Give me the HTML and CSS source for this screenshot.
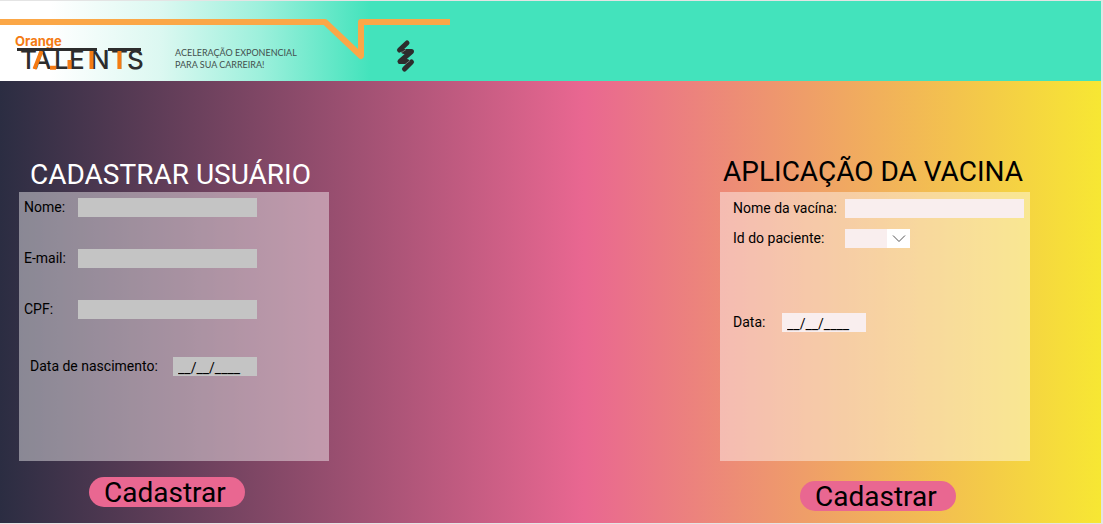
FILE: index.html
```html
<!DOCTYPE html>
<html lang="pt-BR">
<head>
<meta charset="utf-8">
<title>Orange Talents</title>
<link rel="stylesheet" href="styles.css">
</head>
<body>
<div class="page">
  <header class="banner">
    <svg class="brand" width="450" height="80" viewBox="0 1 450 80" role="img" aria-label="Orange Talents">
      <path class="ribbon" d="M0 22H325L361 56V22H450"/>
      <text class="brand-top" x="15" y="46">Orange</text>
      <text class="brand-name" y="69" x="20 33 54 69 90 111 127">TALENTS</text>
      <path class="brand-accent" d="M41.500 51L34.500 69M50 67.700H56M69.500 60V69M91.500 51V69M119.500 51V69"/>
      <path class="brand-bar" d="M17 49.500H97M108 49.500H141"/>
      <text class="tagline" x="175" y="56">ACELERAÇÃO EXPONENCIAL</text>
      <text class="tagline" x="175" y="68">PARA SUA CARREIRA!</text>
      <path class="bolt" d="M407 43L399.500 50M404 51.500H411.500L400 61.500H407M411.500 62L404.500 69"/>
      <path class="bolt-gap" d="M401 53L406 49.500M405 64.500L410 60.500"/>
    </svg>
  </header>
  <main class="content">
    <form class="column user">
      <h1 class="title">CADASTRAR USUÁRIO</h1>
      <div class="panel">
        <div class="row"><label for="nome">Nome:</label><input class="box" id="nome" type="text"></div>
        <div class="row"><label for="email">E-mail:</label><input class="box" id="email" type="email"></div>
        <div class="row"><label for="cpf">CPF:</label><input class="box" id="cpf" type="text"></div>
        <div class="row birth"><label for="nascimento">Data de nascimento:</label><input class="box date" id="nascimento" type="text" value="__/__/____"></div>
      </div>
      <button class="submit" type="button">Cadastrar</button>
    </form>
    <form class="column vaccine">
      <h1 class="title">APLICAÇÃO DA VACINA</h1>
      <div class="panel">
        <div class="row"><label for="vacina">Nome da vacína:</label><input class="box" id="vacina" type="text"></div>
        <div class="row"><label for="paciente">Id do paciente:</label>
          <span class="picker"><select class="box" id="paciente"><option></option></select><svg class="arrow" width="23" height="19" viewBox="0 0 23 19" aria-hidden="true"><path d="M6 6.500L12 12.500L18 6.500"/></svg></span>
        </div>
        <div class="row applied"><label for="data">Data:</label><input class="box date" id="data" type="text" value="__/__/____"></div>
      </div>
      <button class="submit" type="button">Cadastrar</button>
    </form>
  </main>
</div>
</body>
</html>
```
FILE: styles.css
```css
* {
  box-sizing: border-box;
}

body {
  margin: 0;
  background: #e4e4e4;
  font-family: Roboto, "Liberation Sans", sans-serif;
  color: #000;
}

.page {
  display: flex;
  flex-direction: column;
  min-height: 100vh;
  padding: 1px 2px 1px 0;
}

.banner {
  background: linear-gradient(90deg, #fff 50px, #dcf8f1 160px, #9df0dc 260px, #43e3bc 370px);
}

.brand {
  display: block;
}

.ribbon {
  fill: none;
  stroke: #fba747;
  stroke-width: 6;
  stroke-linejoin: round;
}

.brand-top {
  font: 700 13px Inter, sans-serif;
  fill: #f47b14;
}

.brand-name {
  font: 500 26px Inter, sans-serif;
  fill: #2d2d2d;
}

.brand-bar {
  stroke: #2d2d2d;
  stroke-width: 3;
}

.brand-accent {
  fill: none;
  stroke: #f47b14;
  stroke-width: 4;
}

.tagline {
  font: 400 9px Lato, sans-serif;
  fill: #43504d;
}

.bolt {
  fill: none;
  stroke: #2d2d2d;
  stroke-width: 5;
  stroke-linecap: round;
  stroke-linejoin: round;
}

.bolt-gap {
  stroke: #6b7a76;
  stroke-width: 1;
}

.content {
  display: flex;
  flex: 1;
  justify-content: space-between;
  align-items: flex-start;
  padding: 75px 71px 12px 19px;
  background: linear-gradient(90deg, #2b2d42, #e96791 53%, #f7e733);
}

.column {
  display: flex;
  flex-direction: column;
  width: 310px;
}

.title {
  margin: 0;
  padding: 2px 0 0 11px;
  font-size: 28px;
  font-weight: 400;
  line-height: 34px;
  white-space: nowrap;
  color: #fff;
}

.vaccine .title {
  padding: 0 0 4px 3px;
  line-height: 32px;
  color: #000;
}

.panel {
  display: flex;
  flex-direction: column;
  gap: 32px;
  min-height: 269px;
  padding: 6px 5px;
  background: rgba(255, 255, 255, 0.43);
}

.vaccine .panel {
  gap: 11px;
  padding: 7px 13px;
}

.row {
  display: grid;
  grid-template-columns: 54px auto;
  justify-content: start;
  align-items: center;
  font-size: 14px;
  line-height: 19px;
}

.vaccine .row {
  grid-template-columns: 112px auto;
}

.user .birth {
  grid-template-columns: 143px auto;
  margin-top: 6px;
  padding-left: 6px;
}

.vaccine .applied {
  grid-template-columns: 49px auto;
  margin-top: 54px;
}

.box {
  display: block;
  width: 179px;
  height: 19px;
  margin: 0;
  padding: 0 5px;
  border: 0;
  border-radius: 0;
  background: #c4c4c4;
  font: inherit;
  color: #000;
}

.vaccine .box {
  background: #f9eeee;
}

.date {
  width: 84px;
  padding-top: 4px;
}

.picker {
  position: relative;
  width: 65px;
}

.picker .box {
  width: 65px;
  appearance: none;
}

.arrow {
  position: absolute;
  top: 0;
  right: 0;
  background: #fff;
  fill: none;
  stroke: #555;
  pointer-events: none;
}

.submit {
  width: 156px;
  height: 30px;
  margin: 16px 0 0 70px;
  padding: 2px 15px 0;
  border: 0;
  border-radius: 15px;
  background: #e96791;
  font: 400 28px/28px Roboto, sans-serif;
  text-align: left;
  color: #000;
}

.vaccine .submit {
  margin: 20px 0 0 80px;
}
```
